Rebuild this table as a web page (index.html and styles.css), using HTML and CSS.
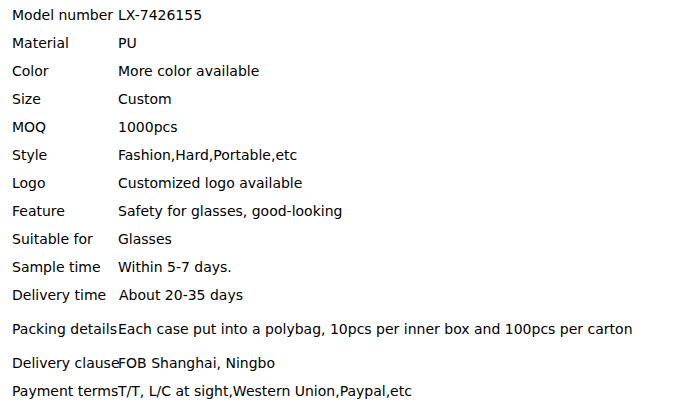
FILE: index.html
```html
<!DOCTYPE html>
<html>
<head>
<meta charset="utf-8">
<link rel="stylesheet" href="styles.css">
</head>
<body>
<div class="specs">
  <div class="row"><span class="label">Model number</span><span class="value">LX-7426155</span></div>
  <div class="row"><span class="label">Material</span><span class="value">PU</span></div>
  <div class="row"><span class="label">Color</span><span class="value">More color available</span></div>
  <div class="row"><span class="label">Size</span><span class="value">Custom</span></div>
  <div class="row"><span class="label">MOQ</span><span class="value">1000pcs</span></div>
  <div class="row"><span class="label">Style</span><span class="value">Fashion,Hard,Portable,etc</span></div>
  <div class="row"><span class="label">Logo</span><span class="value">Customized logo available</span></div>
  <div class="row"><span class="label">Feature</span><span class="value">Safety for glasses, good-looking</span></div>
  <div class="row"><span class="label">Suitable for</span><span class="value">Glasses</span></div>
  <div class="row"><span class="label">Sample time</span><span class="value">Within 5-7 days.</span></div>
  <div class="row"><span class="label">Delivery time</span><span class="value shifted">About 20-35 days</span></div>
  <div class="row tall"><span class="label">Packing details</span><span class="value">Each case put into a polybag, 10pcs per inner box and 100pcs per carton</span></div>
  <div class="row"><span class="label">Delivery clause</span><span class="value">FOB Shanghai, Ningbo</span></div>
  <div class="row"><span class="label">Payment terms</span><span class="value">T/T, L/C at sight,Western Union,Paypal,etc</span></div>
</div>
</body>
</html>
```
FILE: styles.css
```css
html, body {
  margin: 0;
  background: #fff;
}
.specs {
  padding: 1px 0 0 12px;
  font-family: "DejaVu Sans", Verdana, sans-serif;
  font-size: 14px;
  color: #000;
}
.row {
  display: grid;
  grid-template-columns: 106px auto;
  height: 28px;
  line-height: 28px;
  white-space: nowrap;
}
.row.tall {
  height: 40px;
  line-height: 40px;
}
.label {
  overflow: visible;
}
.value.shifted {
  padding-left: 1px;
}
```
